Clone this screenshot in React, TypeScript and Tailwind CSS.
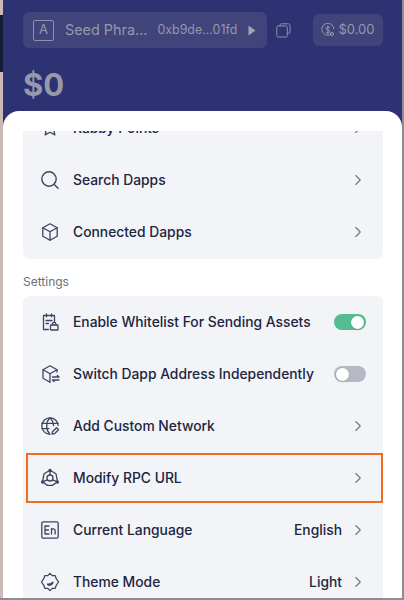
import { ChevronRight } from "lucide-react";
import type { ReactNode } from "react";

function Row({ icon, label, value, toggle, highlight }: { icon: ReactNode; label: string; value?: string; toggle?: boolean; highlight?: boolean }) {
  return (
    <div className="relative flex h-[52px] shrink-0 items-center pl-[17px] pr-[16px]">
      <span className="flex w-[20px] justify-center text-[#3c4560]">{icon}</span>
      <span className="ml-[13px] flex-1 whitespace-nowrap text-[13.85px] font-medium text-[#1c2540]">{label}</span>
      {value && <span className="mr-[7px] text-[13.85px] font-medium text-[#1c2540]">{value}</span>}
      {toggle === undefined ? (
        <ChevronRight className="h-[18px] w-[18px] text-[#6f7585]" strokeWidth={1.5} />
      ) : (
        <Toggle on={toggle} />
      )}
      {/* annotation box drawn over the row */}
      {highlight && <span className="absolute bottom-[1px] left-[3px] right-0 top-[1px] border-2 border-[#f26b21]" />}
    </div>
  );
}

function Toggle({ on }: { on: boolean }) {
  return (
    <span className={`mr-[1px] flex h-[16px] w-[32px] items-center rounded-full px-[2px] ${on ? "justify-end bg-[#55bb91]" : "justify-start bg-[#b4b9c4]"}`}>
      <span className="h-[13px] w-[13px] rounded-full bg-white shadow-sm" />
    </span>
  );
}

const svgProps = { width: 20, height: 20, viewBox: "0 0 20 20", fill: "none", stroke: "currentColor", strokeWidth: 1.3, strokeLinecap: "round" as const, strokeLinejoin: "round" as const };

const StarIcon = () => (
  <svg {...svgProps}>
    <path d="M10 2l2.4 5 5.4.7-4 3.8 1 5.4-4.8-2.6-4.8 2.6 1-5.4-4-3.8 5.4-.7z" />
  </svg>
);
const SearchIcon = () => (
  <svg {...svgProps} strokeWidth={1.4}>
    <circle cx="9" cy="9" r="7.2" />
    <path d="M14.5 14.8l3.6 3.4" />
  </svg>
);
const BoxIcon = () => (
  <svg {...svgProps}>
    <path d="M10 1.8l7.2 4v8.4l-7.2 4-7.2-4V5.8z" />
    <path d="M2.8 5.8l7.2 4 7.2-4M10 9.8v8.4" />
  </svg>
);
const ClipboardLockIcon = () => (
  <svg {...svgProps}>
    <path d="M8.5 17.5H3.5v-14h11v6" />
    <path d="M6.5 1.8v3M11.5 1.8v3M6 8.5h6M6 11.5h2.5" />
    <rect x="10.5" y="13" width="7.5" height="5" rx="0.6" />
    <path d="M12.5 13v-1a1.7 1.7 0 013.4 0v1" />
  </svg>
);
const BoxSwitchIcon = () => (
  <svg {...svgProps}>
    <path d="M17 8V5.8l-7-4-7 4v8.4l7 4" />
    <path d="M3 5.8l7 4 7-4M10 9.8v8" />
    <path d="M12.5 13h6.5l-1.6-1.5M19 16h-6.5l1.6 1.5" />
  </svg>
);
const GlobeEditIcon = () => (
  <svg {...svgProps}>
    <path d="M18.2 9.5a8.2 8.2 0 10-8.7 8.7" />
    <path d="M2 7.4h16M2 12.6h7M9.8 1.8c-4.2 4.6-4.2 11.8 0 16.4M10.2 1.8c2 2.2 3.2 4.9 3.4 7.7" />
    <path d="M12 18.2l.5-2.5 4-4 2 2-4 4z" />
  </svg>
);
const RpcIcon = () => (
  <svg {...svgProps}>
    <path d="M10 2.2l6 3.6 1.5 8-5 3.6h-5l-5-3.6 1.5-8z" />
    <circle cx="10" cy="10" r="3" />
    <path d="M10 2.2V7M2.5 13.8l5-2M17.5 13.8l-5-2" />
    <circle cx="10" cy="2.4" r="1" fill="currentColor" />
    <circle cx="2.6" cy="14" r="1" fill="currentColor" />
    <circle cx="17.4" cy="14" r="1" fill="currentColor" />
  </svg>
);
const LanguageIcon = () => (
  <svg {...svgProps}>
    <rect x="1.8" y="1.8" width="16.4" height="16.4" rx="1.6" />
    <path d="M9 6H5v8h4M5 10h3.5M11.5 14V8.5M11.5 10c1-1.6 3.6-1.6 3.6.6V14" />
  </svg>
);
const ThemeIcon = () => (
  <svg {...svgProps}>
    <path d="M10 1.4l2.2 2.2h3l1 3L18.6 10l-2.4 3.4-1 3h-3L10 18.6l-2.2-2.2h-3l-1-3L1.4 10l2.4-3.4 1-3h3z" />
    <path d="M13 10.2a3.2 3.2 0 01-5.5 2c2 .2 4-.8 5.5-2z" />
  </svg>
);

export default function App() {
  return (
    <div className="flex h-[600px] w-[404px] overflow-hidden bg-[#8d8d92] pb-[2px] pr-[2px] text-[#1c2540] [font-family:Inter,'Liberation_Sans',sans-serif]">
      {/* window edge */}
      <div className="flex w-[3px] shrink-0 flex-col bg-[#cbb9b8]">
        <div className="mt-[15px] h-[57px] bg-[#141c36]" />
      </div>
      <div className="flex min-w-0 flex-1 flex-col bg-[#2d3272]">
        {/* top bar */}
        <div className="flex h-[111px] shrink-0 flex-col pl-[20px] pr-[19px] pt-[12px]">
          <div className="flex items-center">
            <div className="flex h-[36px] w-[244px] items-center rounded-[6px] bg-[#40447a] pl-[10px] pr-[11px] text-[#9698ab]">
              <span className="flex h-[21px] w-[21px] items-center justify-center rounded-[2px] border border-[#8f91a8] text-[13px]">A</span>
              <span className="ml-[11px] text-[14.4px]">Seed Phra...</span>
              <span className="ml-[10px] text-[12.4px]">0xb9de...01fd</span>
              <svg className="ml-auto" width="8" height="11" viewBox="0 0 8 11">
                <path d="M0.5 0.5L7.5 5.5L0.5 10.5z" fill="#a3a5b5" />
              </svg>
            </div>
            <svg className="ml-[9px]" width="15" height="15" viewBox="0 0 15 15" fill="none" stroke="#8f91a8" strokeWidth="1">
              <rect x="0.8" y="3" width="10.5" height="11" rx="1.5" />
              <path d="M4 3V2a1.2 1.2 0 011.2-1.2h7.3A1.5 1.5 0 0114 2.3V9a1.5 1.5 0 01-1.5 1.5h-1.2" />
            </svg>
            <div className="ml-auto flex h-[32px] w-[70px] items-center justify-center gap-[3px] rounded-[6px] bg-[#40447a] text-[13px] text-[#9698ab]">
              <svg width="14" height="14" viewBox="0 0 14 14" fill="none" stroke="#9698ab" strokeWidth="1">
                <path d="M11 10.5A6 6 0 1112.8 6" />
                <path d="M8.8 4.8C8.3 3.8 5 3.5 5 5.4c0 2 3.8 1.2 3.8 3.2 0 1.8-3.3 1.6-4 .4M6.9 2.6v8.6" />
                <circle cx="11" cy="11" r="1.6" />
              </svg>
              <span>$0.00</span>
            </div>
          </div>
          <div className="mt-[19px] text-[31px] font-bold leading-[36px] text-[#9698ab]">$0</div>
        </div>

        {/* settings sheet */}
        <div className="flex min-h-0 flex-1 flex-col overflow-hidden rounded-t-[16px] bg-white pl-[20px] pr-[19px] pt-[20px]">
          <div className="h-[128px] shrink-0 overflow-hidden rounded-b-[6px] bg-[#f2f4f8]">
            <div className="-mt-[29px]">
              <Row icon={<StarIcon />} label="Rabby Points" />
              <Row icon={<SearchIcon />} label="Search Dapps" />
              <Row icon={<BoxIcon />} label="Connected Dapps" />
            </div>
          </div>
          <div className="mt-[15px] text-[12px] leading-[15px] text-[#6a7080]">Settings</div>
          <div className="mt-[7px] rounded-[6px] bg-[#f2f4f8]">
            <Row icon={<ClipboardLockIcon />} label="Enable Whitelist For Sending Assets" toggle />
            <Row icon={<BoxSwitchIcon />} label="Switch Dapp Address Independently" toggle={false} />
            <Row icon={<GlobeEditIcon />} label="Add Custom Network" />
            <Row icon={<RpcIcon />} label="Modify RPC URL" highlight />
            <Row icon={<LanguageIcon />} label="Current Language" value="English" />
            <Row icon={<ThemeIcon />} label="Theme Mode" value="Light" />
          </div>
        </div>
      </div>
    </div>
  );
}
